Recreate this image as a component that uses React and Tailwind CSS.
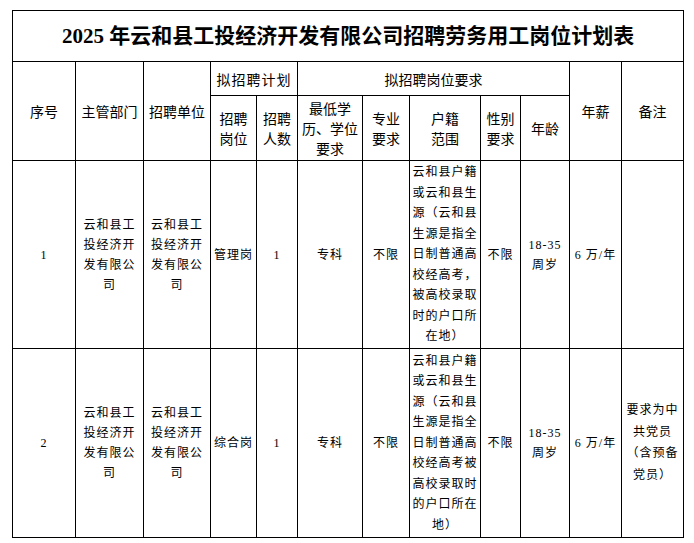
const rows = [
  {
    no: "1",
    dept: ["云和县工", "投经济开", "发有限公", "司"],
    unit: ["云和县工", "投经济开", "发有限公", "司"],
    post: "管理岗",
    count: "1",
    edu: "专科",
    major: "不限",
    hukou: [
      "云和县户籍",
      "或云和县生",
      "源（云和县",
      "生源是指全",
      "日制普通高",
      "校经高考，",
      "被高校录取",
      "时的户口所",
      "在地）",
    ],
    sex: "不限",
    age: ["18-35", "周岁"],
    pay: "6 万/年",
    note: [],
    h: "h-[188px]",
  },
  {
    no: "2",
    dept: ["云和县工", "投经济开", "发有限公", "司"],
    unit: ["云和县工", "投经济开", "发有限公", "司"],
    post: "综合岗",
    count: "1",
    edu: "专科",
    major: "不限",
    hukou: [
      "云和县户籍",
      "或云和县生",
      "源（云和县",
      "生源是指全",
      "日制普通高",
      "校经高考被",
      "高校录取时",
      "的户口所在",
      "地）",
    ],
    sex: "不限",
    age: ["18-35", "周岁"],
    pay: "6 万/年",
    note: ["要求为中", "共党员", "（含预备", "党员）"],
    h: "h-[189px]",
  },
];

const Lines = ({ items }) =>
  items.map((t, i) => (
    <div key={i} className="whitespace-nowrap">
      {t}
    </div>
  ));

const cell = "border border-black text-center align-middle p-0";
const th = `${cell} font-normal`;
const td = cell;

const App = () => {
  return (
    <div className="w-[694px] h-[543px] bg-white pl-[12px] pt-[10px] text-black">
      <table className="table-fixed border-collapse w-[672px] font-['Noto_Sans_CJK_SC',sans-serif] text-[14px] leading-[20px]">
        <colgroup>
          <col className="w-[63px]" />
          <col className="w-[68px]" />
          <col className="w-[67px]" />
          <col className="w-[46px]" />
          <col className="w-[41px]" />
          <col className="w-[65px]" />
          <col className="w-[47px]" />
          <col className="w-[71px]" />
          <col className="w-[40px]" />
          <col className="w-[49px]" />
          <col className="w-[52px]" />
          <col className="w-[62px]" />
        </colgroup>
        <thead>
          <tr className="h-[51px]">
            <th
              colSpan={12}
              className={`${cell} font-bold text-[21px] font-['Liberation_Serif','Noto_Sans_CJK_SC',serif]`}
            >
              2025 年云和县工投经济开发有限公司招聘劳务用工岗位计划表
            </th>
          </tr>
          <tr className="h-[34px]">
            <th rowSpan={2} className={th}>序号</th>
            <th rowSpan={2} className={th}>主管部门</th>
            <th rowSpan={2} className={th}>招聘单位</th>
            <th colSpan={2} className={`${th} tracking-[1px]`}>拟招聘计划</th>
            <th colSpan={5} className={th}>拟招聘岗位要求</th>
            <th rowSpan={2} className={th}>年薪</th>
            <th rowSpan={2} className={th}>备注</th>
          </tr>
          <tr className="h-[65px]">
            <th className={th}><Lines items={["招聘", "岗位"]} /></th>
            <th className={th}><Lines items={["招聘", "人数"]} /></th>
            <th className={th}><Lines items={["最低学", "历、学位", "要求"]} /></th>
            <th className={th}><Lines items={["专业", "要求"]} /></th>
            <th className={th}><Lines items={["户籍", "范围"]} /></th>
            <th className={th}><Lines items={["性别", "要求"]} /></th>
            <th className={th}>年龄</th>
          </tr>
        </thead>
        <tbody className="font-['Liberation_Serif','Noto_Sans_CJK_SC',serif] text-[12px] tracking-[1px]">
          {rows.map((r) => (
            <tr key={r.no} className={r.h}>
              <td className={td}>{r.no}</td>
              <td className={td}><Lines items={r.dept} /></td>
              <td className={td}><Lines items={r.unit} /></td>
              <td className={td}>{r.post}</td>
              <td className={td}>{r.count}</td>
              <td className={td}>{r.edu}</td>
              <td className={td}>{r.major}</td>
              <td className={`${td} leading-[20.5px]`}><Lines items={r.hukou} /></td>
              <td className={td}>{r.sex}</td>
              <td className={td}><Lines items={r.age} /></td>
              <td className={td}>{r.pay}</td>
              <td className={`${td} leading-[21.5px]`}><Lines items={r.note} /></td>
            </tr>
          ))}
        </tbody>
      </table>
    </div>
  );
};

export default App;
